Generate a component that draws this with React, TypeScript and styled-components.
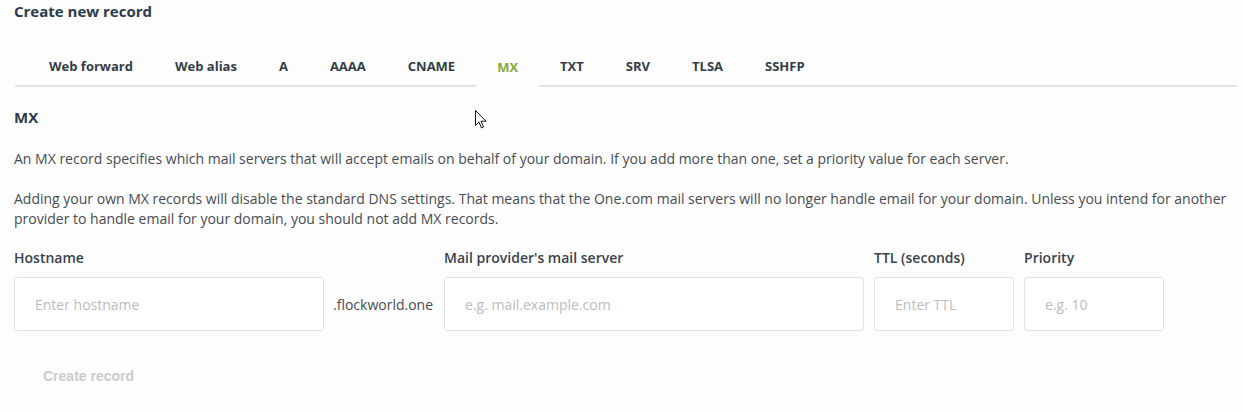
import React, { useState } from "react";
import styled, { createGlobalStyle } from "styled-components";

const GlobalStyle = createGlobalStyle`
  html, body {
    margin: 0;
    padding: 0;
    background: #fdfdfd;
  }
  body {
    font-family: "Open Sans", "Noto Sans", sans-serif;
    color: #474c52;
  }
  * { box-sizing: border-box; }
`;

const tabs = ["Web forward", "Web alias", "A", "AAAA", "CNAME", "MX", "TXT", "SRV", "TLSA", "SSHFP"];

const Page = styled.div`
  position: relative;
  padding: 0 6px 0 14px;
`;

const Title = styled.h2`
  margin: 0;
  font-size: 15px;
  line-height: 22px;
  font-weight: 700;
  color: #2b3b4b;
`;

const TabList = styled.div`
  display: flex;
  margin: 25px 0 0 1px;
  padding-left: 13px;
  border-bottom: 2px solid #e3e3e3;
`;

const Tab = styled.button<{ $active?: boolean }>`
  border: none;
  background: none;
  font-family: inherit;
  font-size: 13px;
  font-weight: 700;
  line-height: 20px;
  padding: 9px 21px 7px;
  color: ${(p) => (p.$active ? "#86a83c" : "#333d47")};
  cursor: pointer;
  margin-bottom: ${(p) => (p.$active ? "-2px" : "0")};
  border-bottom: 2px solid ${(p) => (p.$active ? "#fdfdfd" : "transparent")};
`;

const Heading = styled.h3`
  margin: 19px 0 0;
  font-size: 15px;
  line-height: 22px;
  font-weight: 700;
  color: #2b3b4b;
`;

const Paragraph = styled.p<{ $gap?: number }>`
  margin: ${(p) => p.$gap ?? 20}px 0 0;
  font-size: 14px;
  line-height: 20px;
  color: #474c52;
`;

const FieldRow = styled.div`
  display: flex;
  align-items: flex-end;
  gap: 10px;
  margin-top: 19px;
`;

const Field = styled.label<{ $width: number }>`
  display: flex;
  flex-direction: column;
  gap: 9px;
  width: ${(p) => p.$width}px;
`;

const Label = styled.span`
  font-size: 14px;
  line-height: 20px;
  font-weight: 600;
  color: #39424b;
`;

const Input = styled.input`
  height: 54px;
  width: 100%;
  border: 1px solid #e2e2e2;
  border-radius: 3px;
  background: #fff;
  padding: 0 20px;
  font-family: inherit;
  font-size: 14px;
  color: #333;
  outline: none;
  &::placeholder {
    color: #bcbcbc;
  }
`;

const Suffix = styled.span`
  height: 54px;
  display: flex;
  align-items: center;
  font-size: 14px;
  color: #474c52;
  margin: 0 1px 0 -1px;
`;

const CreateButton = styled.button`
  margin-top: 25px;
  height: 40px;
  padding: 0 29px;
  border: none;
  background: none;
  font-family: "Liberation Sans", Arial, sans-serif;
  font-size: 14px;
  font-weight: 700;
  color: #cbcbcb;
  cursor: default;
`;

const Cursor = styled.svg`
  position: absolute;
  left: 475px;
  top: 110px;
  pointer-events: none;
`;

export default function App() {
  const [active, setActive] = useState("MX");
  return (
    <>
      <GlobalStyle />
      <Page>
        <Title>Create new record</Title>
        <TabList>
          {tabs.map((t) => (
            <Tab key={t} $active={t === active} onClick={() => setActive(t)}>
              {t}
            </Tab>
          ))}
        </TabList>
        <Heading>MX</Heading>
        <Paragraph $gap={21}>
          An MX record specifies which mail servers that will accept emails on behalf of your domain. If you add more
          than one, set a priority value for each server.
        </Paragraph>
        <Paragraph>
          Adding your own MX records will disable the standard DNS settings. That means that the One.com mail servers
          will no longer handle email for your domain. Unless you intend for another provider to handle email for your
          domain, you should not add MX records.
        </Paragraph>
        <FieldRow>
          <Field $width={310}>
            <Label>Hostname</Label>
            <Input placeholder="Enter hostname" />
          </Field>
          <Suffix>.flockworld.one</Suffix>
          <Field $width={420}>
            <Label>Mail provider's mail server</Label>
            <Input placeholder="e.g. mail.example.com" />
          </Field>
          <Field $width={140}>
            <Label>TTL (seconds)</Label>
            <Input placeholder="Enter TTL" />
          </Field>
          <Field $width={140}>
            <Label>Priority</Label>
            <Input placeholder="e.g. 10" />
          </Field>
        </FieldRow>
        <CreateButton disabled>Create record</CreateButton>
        <Cursor width="12" height="19" viewBox="0 0 12 19">
          <path d="M0.5 0.5 L0.5 15.5 L4 12 L6.5 18 L8.5 17 L6 11.2 L11 11.2 Z" fill="#fff" stroke="#111" strokeWidth="1" strokeLinejoin="miter" />
        </Cursor>
      </Page>
    </>
  );
}
